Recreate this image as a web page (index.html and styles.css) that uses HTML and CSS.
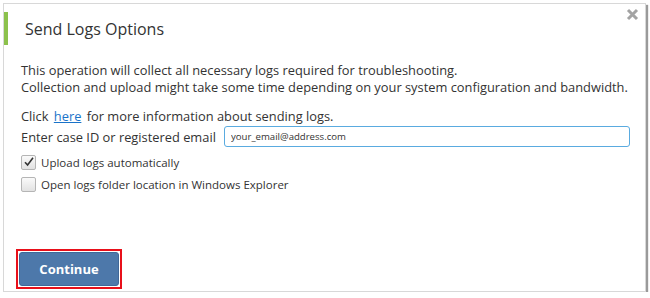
FILE: index.html
```html
<!DOCTYPE html>
<html lang="en">
<head>
    <meta charset="UTF-8">
    <title>Send Logs Options</title>
    <link rel="stylesheet" href="styles.css">
</head>
<body>
<div class="dialog">
    <div class="dialog-header">
        <h2>Send Logs Options</h2>
        <span class="close">
            <svg width="13" height="13" viewBox="0 0 13 13"><path d="M2 2 L11 11 M11 2 L2 11" stroke="#a3a3a3" stroke-width="3"/></svg>
        </span>
    </div>
    <div class="dialog-body">
        <p class="intro">This operation will collect all necessary logs required for troubleshooting.<br>
        Collection and upload might take some time depending on your system configuration and bandwidth.</p>
        <p class="help">Click <a href="#">here</a> for more information about sending logs.</p>
        <div class="field">
            <label>Enter case ID or registered email</label>
            <input type="text" value="your_email@address.com">
        </div>
        <div class="check-row">
            <span class="checkbox checked">
                <svg width="12" height="12" viewBox="0 0 12 12"><path d="M2 6.2 L4.6 9 L10 1.8" fill="none" stroke="#333" stroke-width="1.6"/></svg>
            </span>
            <span>Upload logs automatically</span>
        </div>
        <div class="check-row">
            <span class="checkbox"></span>
            <span>Open logs folder location in Windows Explorer</span>
        </div>
    </div>
    <div class="dialog-footer">
        <span class="highlight"><button class="btn-continue">Continue</button></span>
    </div>
</div>
</body>
</html>
```

FILE: styles.css
```css
/* Send logs dialog */
body {
    margin: 0;
    font-family: "Open Sans", Arial, sans-serif;
    background-color: #fff;
    color: #333;
}
.dialog {
    margin: 3px 0 0 3px;
    width: 641px;
    height: 287px;
    border: 1px solid #d8d8d8;
    box-shadow: 2px 2px 1px #9a9a9a;
    background-color: #fff;
    display: flex;
    flex-direction: column;
}
.dialog-header {
    display: flex;
    align-items: center;
    justify-content: space-between;
    margin-top: 8px;
    height: 33px;
    border-left: 4px solid #8cc14c;
}
.dialog-header h2 {
    margin: 0 0 0 17px;
    font-size: 16px;
    font-weight: normal;
    color: #333;
}
.close {
    align-self: flex-start;
    margin: -4px 6px 0 0;
    line-height: 0;
}
.dialog-body {
    padding: 0 0 0 17px;
    font-size: 12.85px;
}
.dialog-body p {
    margin: 0;
    line-height: 17px;
}
.intro {
    margin-top: 17px !important;
}
.help {
    margin-top: 12px !important;
}
.help a {
    margin: 0 2px;
    color: #1a73c9;
}
.field {
    display: flex;
    align-items: center;
    margin-top: 1px;
}
.field label {
    width: 203px;
}
.field input {
    width: 392px;
    height: 19px;
    padding: 0 6px;
    border: 1px solid #5aabe0;
    border-radius: 3px;
    font-family: "Open Sans", Arial, sans-serif;
    font-size: 9.6px;
    color: #333;
}
.check-row {
    display: flex;
    align-items: center;
    font-size: 11.5px;
    height: 14px;
}
.check-row + .check-row {
    margin-top: 8px;
}
.field + .check-row {
    margin-top: 8px;
}
.checkbox {
    width: 13px;
    height: 13px;
    margin-right: 5px;
    border: 1px solid #b5b5b5;
    border-radius: 2px;
    background: linear-gradient(#fafafa, #e2e2e2);
    display: flex;
    align-items: center;
    justify-content: center;
}
.dialog-footer {
    margin-top: auto;
    padding: 0 0 2px 12px;
}
.highlight {
    display: inline-block;
    border: 2px solid #e8101a;
    padding: 1px;
}
.btn-continue {
    display: block;
    width: 100px;
    height: 34px;
    border: 1px solid #3f6899;
    border-radius: 3px;
    background-color: #4d78aa;
    color: #fff;
    font-family: "Open Sans", Arial, sans-serif;
    font-size: 13px;
    font-weight: bold;
}
```
